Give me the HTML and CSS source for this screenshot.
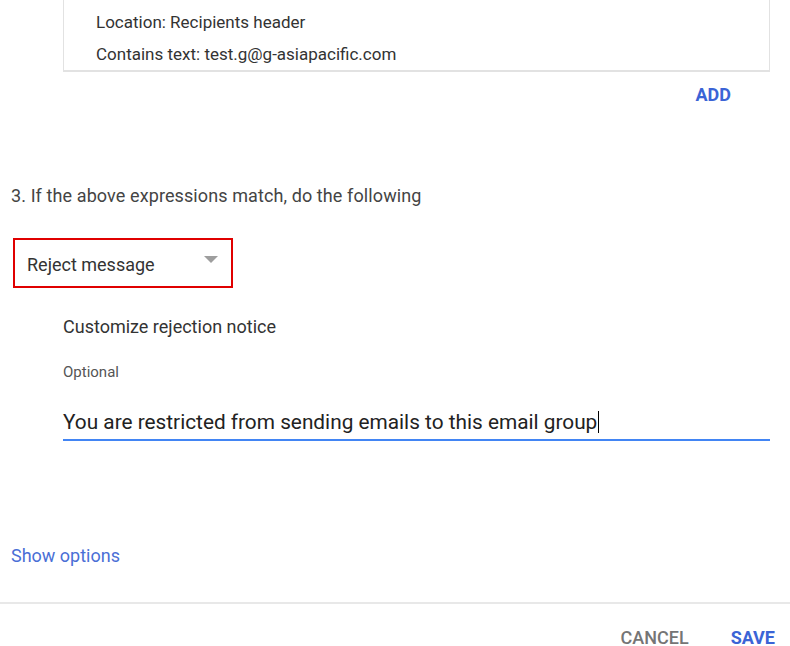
FILE: index.html
```html
<!DOCTYPE html>
<html>
<head>
<meta charset="utf-8">
<link rel="stylesheet" href="styles.css">
</head>
<body>
<div class="page">
  <section class="matches">
    <div class="card">
      <div class="card-line">Location: Recipients header</div>
      <div class="card-line">Contains text: test.g@g-asiapacific.com</div>
    </div>
    <div class="add-row"><button class="btn btn-primary">ADD</button></div>
  </section>

  <section class="action">
    <p class="step">3. If the above expressions match, do the following</p>
    <div class="select">
      <span class="select-value">Reject message</span>
      <span class="select-arrow"></span>
    </div>
    <div class="notice">
      <div class="notice-title">Customize rejection notice</div>
      <div class="notice-hint">Optional</div>
      <div class="field">
        <span class="field-text">You are restricted from sending emails to this email group</span><span class="caret"></span>
      </div>
    </div>
  </section>

  <a class="show-options">Show options</a>

  <footer class="footer">
    <button class="btn btn-muted">CANCEL</button>
    <button class="btn btn-primary">SAVE</button>
  </footer>
</div>
</body>
</html>
```

FILE: styles.css
```css
html, body {
  margin: 0;
  padding: 0;
  background: #fff;
}

body {
  font-family: Roboto, "Liberation Sans", sans-serif;
  color: #333;
  width: 790px;
  height: 646px;
  overflow: hidden;
}

.page {
  display: flex;
  flex-direction: column;
}

/* condition card, scrolled so its top edge is out of view */
.matches {
  padding: 0 20px 0 63px;
}

.card {
  border: 1px solid #e2e2e2;
  border-top: none;
  border-bottom-width: 2px;
  padding: 11px 0 5px 32px;
  display: flex;
  flex-direction: column;
  gap: 10px;
}

.card-line {
  font-size: 17px;
  line-height: 22px;
  color: #333;
}

.add-row {
  display: flex;
  justify-content: flex-end;
  padding: 13px 39px 0 0;
}

.btn {
  border: none;
  background: none;
  padding: 0;
  font-family: Roboto, "Liberation Sans", sans-serif;
  font-size: 18px;
  font-weight: 500;
  line-height: 20px;
  cursor: pointer;
}

.btn-primary {
  color: #3b64d6;
  font-weight: 700;
}

.btn-muted {
  color: #757575;
}

.action {
  padding: 0 20px 0 11px;
}

.step {
  margin: 80px 0 0;
  font-size: 18px;
  line-height: 22px;
  letter-spacing: 0.1px;
  color: #444;
}

.select {
  margin: 31px 0 0 2px;
  width: 220px;
  height: 50px;
  box-sizing: border-box;
  border: 2px solid #e00000;
  display: flex;
  align-items: center;
  justify-content: space-between;
  padding: 2px 13px 0 12px;
}

.select-value {
  font-size: 18px;
  color: #333;
}

.select-arrow {
  width: 0;
  height: 0;
  border-left: 7px solid transparent;
  border-right: 7px solid transparent;
  border-top: 7px solid #9e9e9e;
  margin-top: -10px;
}

.notice {
  padding: 0 0 0 52px;
}

.notice-title {
  margin-top: 28px;
  font-size: 18px;
  line-height: 22px;
  color: #333;
}

.notice-hint {
  margin-top: 25px;
  font-size: 15px;
  line-height: 18px;
  color: #555;
}

.field {
  margin-top: 27px;
  border-bottom: 2px solid #4285f4;
  display: flex;
  align-items: center;
  padding-bottom: 3px;
}

.field-text {
  font-size: 20.8px;
  line-height: 28px;
  color: #222;
}

.caret {
  width: 1px;
  height: 22px;
  background: #000;
  margin-left: 1px;
}

.show-options {
  margin: 104px 0 0 11px;
  font-size: 18px;
  line-height: 22px;
  color: #4a6fd6;
  cursor: pointer;
}

.footer {
  margin-top: 35px;
  border-top: 2px solid #e8e8e8;
  display: flex;
  justify-content: flex-end;
  gap: 42px;
  padding: 24px 15px 0 0;
}
```
